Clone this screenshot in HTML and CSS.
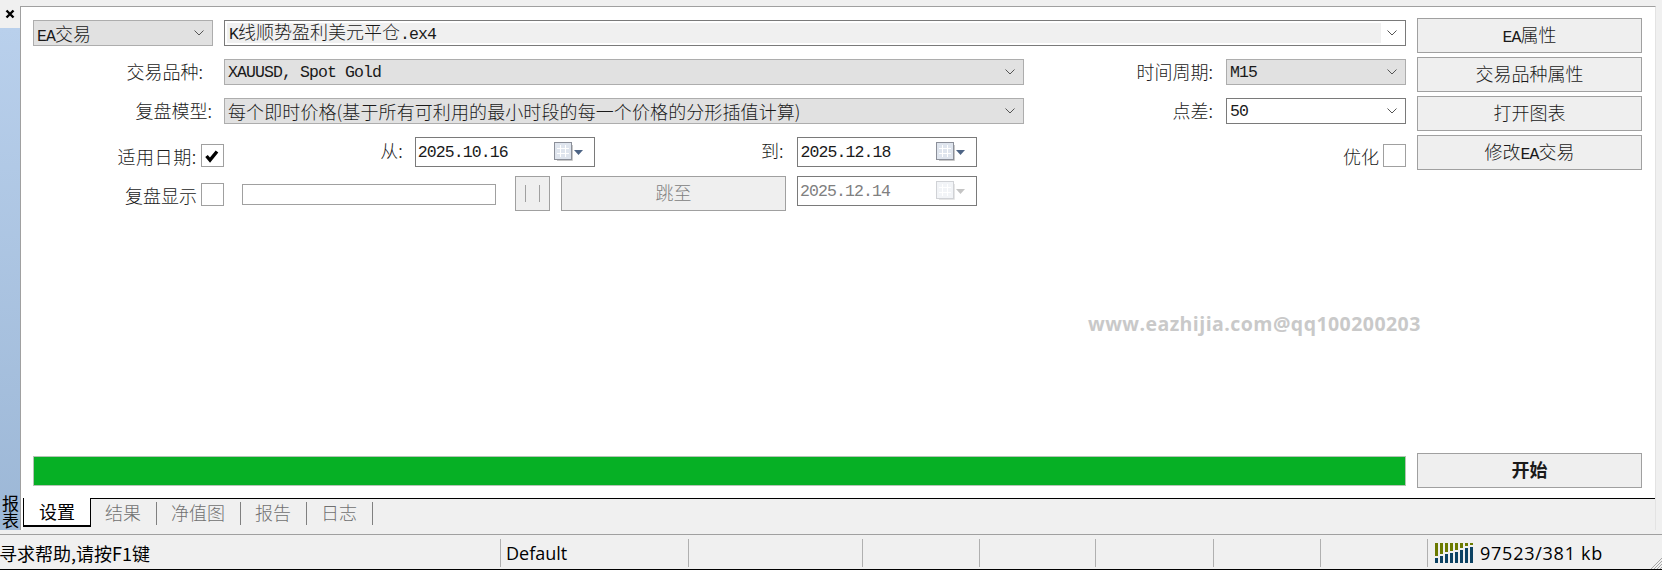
FILE: index.html
```html
<!DOCTYPE html>
<html>

<head>
  <meta charset="utf-8" />
  <title>Strategy Tester</title>
  <link rel="stylesheet" href="styles.css">
</head>

<body>
  <div class="workspace">
    <div class="sidebar">
      <div class="close-box">
        <svg width="10" height="10" viewBox="0 0 10 10"><path d="M1.5 1.5L8.5 8.5M8.5 1.5L1.5 8.5" stroke="#000" stroke-width="2.4" /></svg>
      </div>
      <div class="side-strip"><span class="side-label">报表</span></div>
    </div>
    <div class="panel">
      <div class="watermark">www.eazhijia.com@qq100200203</div>
      <div class="setup">
        <div class="fields">
          <div class="row">
            <div class="combo gray expert"><span class="value"><span class="lat">EA</span>交易</span>
              <svg class="chev" width="10" height="6" viewBox="0 0 10 6"><path d="M0.5 0.5L5 5L9.5 0.5" fill="none" stroke="#555" /></svg>
            </div>
            <div class="combo file"><span class="value selected"><span class="lat">K</span>线顺势盈利美元平仓<span class="lat">.ex4</span></span>
              <svg class="chev" width="10" height="6" viewBox="0 0 10 6"><path d="M0.5 0.5L5 5L9.5 0.5" fill="none" stroke="#555" /></svg>
            </div>
          </div>
          <div class="row">
            <label class="label w-symbol">交易品种:</label>
            <div class="combo gray wide"><span class="value lat">XAUUSD, Spot Gold</span>
              <svg class="chev" width="10" height="6" viewBox="0 0 10 6"><path d="M0.5 0.5L5 5L9.5 0.5" fill="none" stroke="#555" /></svg>
            </div>
            <label class="label side-name">时间周期:</label>
            <div class="combo gray small"><span class="value lat">M15</span>
              <svg class="chev" width="10" height="6" viewBox="0 0 10 6"><path d="M0.5 0.5L5 5L9.5 0.5" fill="none" stroke="#555" /></svg>
            </div>
          </div>
          <div class="row">
            <label class="label w-model">复盘模型:</label>
            <div class="combo gray wide"><span class="value model">每个即时价格(基于所有可利用的最小时段的每一个价格的分形插值计算)</span>
              <svg class="chev" width="10" height="6" viewBox="0 0 10 6"><path d="M0.5 0.5L5 5L9.5 0.5" fill="none" stroke="#555" /></svg>
            </div>
            <label class="label side-name">点差:</label>
            <div class="combo small"><span class="value lat">50</span>
              <svg class="chev" width="10" height="6" viewBox="0 0 10 6"><path d="M0.5 0.5L5 5L9.5 0.5" fill="none" stroke="#555" /></svg>
            </div>
          </div>
          <div class="row">
            <label class="label w-check low spaced">适用日期:</label>
            <div class="check low">
              <svg width="16" height="14" viewBox="0 0 16 14"><path d="M2.5 7L6 11L13 2.5" fill="none" stroke="#000" stroke-width="3.4" /></svg>
            </div>
            <label class="label w-from">从:</label>
            <div class="date from"><span class="value lat">2025.10.16</span>
              <svg class="cal" width="30" height="20" viewBox="0 0 30 20">
                <rect x="0.5" y="0.5" width="17" height="17" fill="#dfe5ee" stroke="#8b8f99" />
                <path d="M6.5 3V15M11.5 3V15M3 6.5H15M3 11.5H15" stroke="#fff" />
                <path d="M18.5 3V18.500H3" fill="none" stroke="#c8c8c8" />
                <path d="M20 8H29L24.500 13Z" fill="#4d6485" />
              </svg>
            </div>
            <label class="label w-to">到:</label>
            <div class="date"><span class="value lat">2025.12.18</span>
              <svg class="cal" width="30" height="20" viewBox="0 0 30 20">
                <rect x="0.5" y="0.5" width="17" height="17" fill="#dfe5ee" stroke="#8b8f99" />
                <path d="M6.5 3V15M11.5 3V15M3 6.5H15M3 11.5H15" stroke="#fff" />
                <path d="M18.5 3V18.500H3" fill="none" stroke="#c8c8c8" />
                <path d="M20 8H29L24.500 13Z" fill="#4d6485" />
              </svg>
            </div>
            <label class="label optimize low">优化</label>
            <div class="check low"></div>
          </div>
          <div class="row">
            <label class="label w-check low">复盘显示</label>
            <div class="check low"></div>
            <div class="speed"></div>
            <div class="btn pause"><span class="pause-bar"></span><span class="pause-bar"></span></div>
            <div class="btn jump">跳至</div>
            <div class="date off"><span class="value lat">2025.12.14</span>
              <svg class="cal" width="30" height="20" viewBox="0 0 30 20">
                <rect x="0.5" y="0.5" width="17" height="17" fill="#f2f4f7" stroke="#d0d2d6" />
                <path d="M6.5 3V15M11.5 3V15M3 6.5H15M3 11.5H15" stroke="#fff" />
                <path d="M18.5 3V18.500H3" fill="none" stroke="#e6e6e6" />
                <path d="M20 8H29L24.500 13Z" fill="#c4c4c4" />
              </svg>
            </div>
          </div>
        </div>
        <div class="actions">
          <div class="btn"><span><span class="lat">EA</span>属性</span></div>
          <div class="btn">交易品种属性</div>
          <div class="btn">打开图表</div>
          <div class="btn"><span>修改<span class="lat">EA</span>交易</span></div>
        </div>
      </div>
      <div class="run">
        <div class="progress"></div>
        <div class="btn start">开始</div>
      </div>
      <div class="tabs">
        <div class="tab active">设置</div>
        <div class="tab">结果</div>
        <div class="tab">净值图</div>
        <div class="tab">报告</div>
        <div class="tab">日志</div>
      </div>
    </div>
  </div>
  <div class="statusbar">
    <div class="cell help">寻求帮助,请按F1键</div>
    <div class="cell profile">Default</div>
    <div class="cell s1"></div>
    <div class="cell s2"></div>
    <div class="cell s3"></div>
    <div class="cell s4"></div>
    <div class="cell s5"></div>
    <div class="cell s6"></div>
    <div class="cell memory">
      <svg width="38" height="20" viewBox="0 0 38 20">
        <g fill="#6b7a00">
          <rect x="0" y="0" width="3" height="13" />
          <rect x="5" y="0" width="3" height="11" />
          <rect x="10" y="0" width="3" height="9" />
          <rect x="15" y="0" width="3" height="8" />
          <rect x="20" y="0" width="3" height="7" />
          <rect x="25" y="0" width="3" height="5" />
          <rect x="30" y="0" width="3" height="3" />
          <rect x="35" y="0" width="3" height="2" />
        </g>
        <g fill="#0b4263">
          <rect x="0" y="15" width="3" height="5" />
          <rect x="5" y="13" width="3" height="7" />
          <rect x="10" y="11" width="3" height="9" />
          <rect x="15" y="10" width="3" height="10" />
          <rect x="20" y="9" width="3" height="11" />
          <rect x="25" y="7" width="3" height="13" />
          <rect x="30" y="5" width="3" height="15" />
          <rect x="35" y="4" width="3" height="16" />
        </g>
      </svg>
      <span class="usage">97523/381 kb</span>
    </div>
    <svg class="grip" width="12" height="12" viewBox="0 0 12 12">
      <path d="M12 1L1 12M12 4L4 12M12 7L7 12M12 10L10 12" stroke="#a8a8a8" />
    </svg>
  </div>
</body>

</html>
```

FILE: styles.css
```css
html,
body {
  margin: 0;
  padding: 0;
}

body {
  width: 1662px;
  height: 570px;
  overflow: hidden;
  background: #f0f0f0;
  color: #1a1a1a;
  font-family: "Noto Sans CJK SC", sans-serif;
  font-size: 18px;
  font-weight: 300;
  line-height: 24px;
}

.lat {
  font-family: "Liberation Mono", monospace;
  font-size: 16.5px;
  font-weight: 400;
  letter-spacing: -0.9px;
  line-height: 1;
}

.workspace {
  display: flex;
  height: 534px;
}

/* left strip */
.sidebar {
  width: 20px;
  display: flex;
  flex-direction: column;
}

.close-box {
  height: 28px;
  display: flex;
  align-items: center;
  justify-content: center;
}

.side-strip {
  height: 502px;
  display: flex;
  align-items: flex-end;
  justify-content: center;
  background: linear-gradient(#b9d0ec, #9cb7d6);
}

.side-label {
  writing-mode: vertical-rl;
  color: #000;
  font-size: 17px;
  line-height: 20px;
  font-weight: 400;
  margin-bottom: 1px;
}

/* main panel */
.panel {
  position: relative;
  width: 1634px;
  margin-top: 6px;
  height: 523px;
  background: #fff;
  border-top: 1px solid #a0a0a0;
  border-left: 1px solid #a0a0a0;
  border-right: 1px solid #e3e3e3;
  display: flex;
  flex-direction: column;
}

.watermark {
  position: absolute;
  left: 1067px;
  top: 305px;
  color: #c9c9c9;
  font-family: "Open Sans", sans-serif;
  font-size: 19.5px;
  font-weight: 700;
  letter-spacing: 0.45px;
  white-space: nowrap;
}

.setup {
  display: flex;
  gap: 11px;
  padding: 11px 0 0 12px;
}

.fields {
  width: 1373px;
  padding-top: 2px;
}

.row {
  display: flex;
  height: 39px;
  align-items: flex-start;
}

.label {
  text-align: right;
  white-space: nowrap;
}

.spaced {
  letter-spacing: 0.6px;
}

.low {
  margin-top: 7px;
}

.w-symbol {
  width: 170px;
  margin-right: 21px;
}

.w-model {
  width: 179px;
  margin-right: 12px;
}

.side-name {
  width: 189px;
  margin-right: 13px;
}

.w-check {
  width: 164px;
  margin-right: 4px;
}

.w-from {
  width: 179px;
  margin-right: 12px;
  padding-top: 1px;
}

.w-to {
  width: 189px;
  margin-right: 14px;
  padding-top: 1px;
}

.optimize {
  width: 402px;
  margin-right: 4px;
}

/* inputs */
.combo {
  box-sizing: border-box;
  height: 26px;
  border: 1px solid #7a7a7a;
  background: #fff;
  display: flex;
  align-items: center;
  justify-content: space-between;
  padding: 0 8px 0 3px;
}

.combo .value {
  white-space: nowrap;
}

.combo .value.lat {
  padding-top: 3px;
}

.combo.gray {
  background: #e1e1e1;
  border-color: #adadad;
}

.combo .chev {
  flex: none;
}

.model {
  letter-spacing: 0.1px;
}

.expert {
  width: 180px;
  margin-right: 11px;
}

.file {
  width: 1182px;
  padding: 2px 8px 2px 2px;
}

.file .selected {
  background: #f0f0f0;
  width: 1152px;
  height: 20px;
  line-height: 16px;
  padding-left: 2px;
}

.wide {
  width: 800px;
}

.small {
  width: 180px;
}

.date {
  box-sizing: border-box;
  width: 180px;
  height: 30px;
  border: 1px solid #7a7a7a;
  background: #fff;
  display: flex;
  align-items: center;
  justify-content: space-between;
  padding: 0 10px 0 2px;
}

.date .value {
  padding-top: 2px;
}

.date.off {
  color: #808080;
}

.cal {
  flex: none;
}

.check {
  box-sizing: border-box;
  width: 23px;
  height: 23px;
  border: 1px solid #a0a0a0;
  background: #fff;
  display: flex;
  align-items: center;
  justify-content: center;
}

.speed {
  box-sizing: border-box;
  width: 254px;
  height: 21px;
  margin: 8px 19px 0 18px;
  border: 1px solid #a0a0a0;
  background: #fff;
}

/* buttons */
.btn {
  box-sizing: border-box;
  height: 35px;
  padding-bottom: 3px;
  border: 1px solid #a0a0a0;
  background: #efefef;
  display: flex;
  align-items: center;
  justify-content: center;
  white-space: nowrap;
}

.actions {
  width: 225px;
  display: flex;
  flex-direction: column;
  gap: 4px;
}

.pause {
  width: 35px;
  gap: 13px;
  margin-right: 11px;
  padding-bottom: 0;
}

.pause-bar {
  width: 1px;
  height: 17px;
  background: #a0a0a0;
}

.jump {
  width: 225px;
  margin-right: 11px;
  color: #808080;
}

.run {
  margin-top: auto;
  display: flex;
  align-items: center;
  gap: 11px;
  padding: 0 0 10px 12px;
}

.progress {
  box-sizing: border-box;
  width: 1373px;
  height: 30px;
  border: 1px solid #b4c4b4;
  background: #06b025;
}

.start {
  width: 225px;
  font-weight: 700;
}

/* tabs */
.tabs {
  height: 31px;
  margin-left: 2px;
  border-top: 1px solid #000;
  background: #f0f0f0;
  display: flex;
  align-items: flex-start;
  color: #707070;
}

.tab {
  height: 23px;
  margin-top: 3px;
  padding: 0 15px 0 14px;
  line-height: 21px;
  border-right: 1px solid #808080;
}

.active {
  box-sizing: border-box;
  width: 68px;
  height: 29px;
  margin-top: -1px;
  padding: 0;
  text-align: center;
  line-height: 27px;
  color: #000;
  font-weight: 400;
  background: #fff;
  border-left: 1px solid #000;
  border-right: 1px solid #000;
  border-bottom: 2px solid #000;
}

/* status bar */
.statusbar {
  position: relative;
  box-sizing: border-box;
  height: 36px;
  border-top: 1px solid #a0a0a0;
  border-bottom: 1px solid #000;
  display: flex;
  font-family: "Open Sans", "Noto Sans CJK SC", sans-serif;
  font-weight: 400;
  color: #000;
  font-size: 18px;
}

.cell {
  box-sizing: border-box;
  height: 28px;
  margin-top: 4px;
  border-left: 1px solid #b0b0b0;
  white-space: nowrap;
  display: flex;
  align-items: center;
}

.help {
  width: 500px;
  border-left: 0;
  font-family: "Noto Sans CJK SC", sans-serif;
  text-indent: -1px;
}

.profile {
  width: 188px;
  padding-left: 5px;
}

.s1 { width: 174px; }
.s2 { width: 117px; }
.s3 { width: 116px; }
.s4 { width: 118px; }
.s5 { width: 107px; }
.s6 { width: 107px; }

.memory {
  padding-left: 7px;
  gap: 7px;
}

.usage {
  letter-spacing: 0.75px;
}

.grip {
  position: absolute;
  right: 0;
  bottom: 0;
}
```
